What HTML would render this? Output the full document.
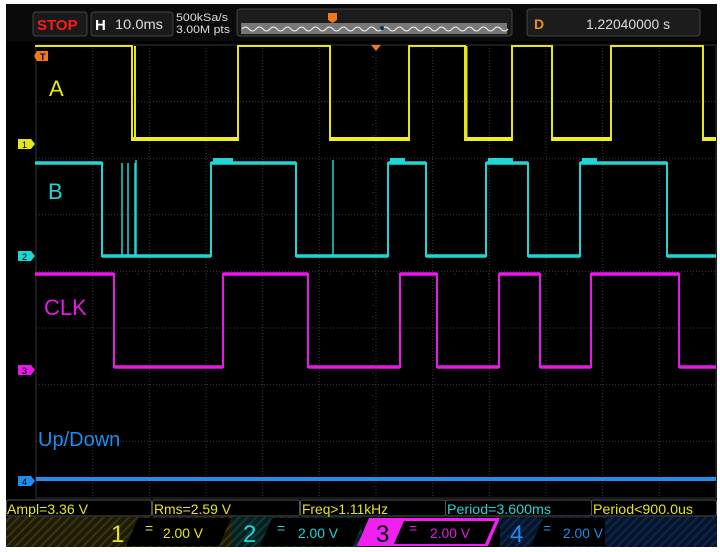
<!DOCTYPE html>
<html><head><meta charset="utf-8"><style>
html,body{margin:0;padding:0;background:#fff;}
svg{display:block;font-family:"Liberation Sans",sans-serif;}
</style></head><body>
<svg width="720" height="552" viewBox="0 0 720 552" xmlns="http://www.w3.org/2000/svg">
<defs>
<pattern id="hy" width="6" height="6" patternUnits="userSpaceOnUse" patternTransform="rotate(45)"><rect width="6" height="6" fill="#1d1a05"/><rect width="2" height="6" fill="#3a3510"/></pattern>
<pattern id="hc" width="6" height="6" patternUnits="userSpaceOnUse" patternTransform="rotate(45)"><rect width="6" height="6" fill="#06201f"/><rect width="2" height="6" fill="#0f3b3a"/></pattern>
<pattern id="hb" width="6" height="6" patternUnits="userSpaceOnUse" patternTransform="rotate(45)"><rect width="6" height="6" fill="#05142a"/><rect width="2" height="6" fill="#0c2747"/></pattern>
</defs>
<rect x="0" y="0" width="720" height="552" fill="#fff"/>
<rect x="6" y="4" width="711" height="543" fill="#000"/>
<!-- top bar -->
<rect x="6" y="4" width="711" height="37" fill="#0a0a0a"/>
<rect x="33" y="12" width="54" height="24" rx="3" fill="#1a1a1a" stroke="#444"/>
<text x="37" y="30" font-size="15" font-weight="bold" fill="#ff1a1a">STOP</text>
<rect x="91" y="12" width="82" height="24" rx="3" fill="#1a1a1a" stroke="#444"/>
<text x="95" y="30" font-size="15" font-weight="bold" fill="#fff">H</text>
<text x="115" y="29" font-size="14" fill="#ddd" textLength="48" lengthAdjust="spacingAndGlyphs">10.0ms</text>
<text x="176" y="21" font-size="11" fill="#ddd" textLength="52" lengthAdjust="spacingAndGlyphs">500kSa/s</text>
<text x="176" y="33" font-size="11" fill="#ddd" textLength="54" lengthAdjust="spacingAndGlyphs">3.00M pts</text>
<rect x="237" y="9" width="275" height="27" rx="3" fill="#1c1c1c" stroke="#444"/>
<rect x="241" y="23" width="266" height="11" fill="#777"/>
<path d="M242 29 q3.5 -4 7 0 t7 0 t7 0 t7 0 t7 0 t7 0 t7 0 t7 0 t7 0 t7 0 t7 0 t7 0 t7 0 t7 0 t7 0 t7 0 t7 0 t7 0 t7 0 t7 0 t7 0 t7 0 t7 0 t7 0 t7 0 t7 0 t7 0 t7 0 t7 0 t7 0 t7 0 t7 0 t7 0 t7 0 t7 0 t7 0 t7 0 t7 0" fill="none" stroke="#eee" stroke-width="1"/>
<circle cx="382" cy="28" r="2" fill="#036"/>
<path d="M328 13 h9 v7 l-4.5 3 l-4.5 -3z" fill="#f07a1a"/>
<rect x="527" y="9" width="173" height="27" rx="3" fill="#1c1c1c" stroke="#444"/>
<text x="534" y="29" font-size="14" font-weight="bold" fill="#f0901a">D</text>
<text x="586" y="29" font-size="14" fill="#ddd" textLength="84" lengthAdjust="spacingAndGlyphs">1.22040000 s</text>
<!-- grid -->
<g stroke="#3a3a3a" stroke-width="1" stroke-dasharray="1,2">
<line x1="92.7" y1="45" x2="92.7" y2="498"/><line x1="149.3" y1="45" x2="149.3" y2="498"/><line x1="206" y1="45" x2="206" y2="498"/><line x1="262.7" y1="45" x2="262.7" y2="498"/><line x1="319.3" y1="45" x2="319.3" y2="498"/><line x1="376" y1="45" x2="376" y2="498"/><line x1="432.7" y1="45" x2="432.7" y2="498"/><line x1="489.3" y1="45" x2="489.3" y2="498"/><line x1="546" y1="45" x2="546" y2="498"/><line x1="602.7" y1="45" x2="602.7" y2="498"/><line x1="659.3" y1="45" x2="659.3" y2="498"/>
<line x1="36" y1="101.6" x2="716" y2="101.6"/><line x1="36" y1="158.2" x2="716" y2="158.2"/><line x1="36" y1="214.8" x2="716" y2="214.8"/><line x1="36" y1="271.4" x2="716" y2="271.4"/><line x1="36" y1="328" x2="716" y2="328"/><line x1="36" y1="384.6" x2="716" y2="384.6"/><line x1="36" y1="441.2" x2="716" y2="441.2"/>
</g>
<line x1="373" y1="45" x2="373" y2="498" stroke="#444" stroke-dasharray="1,10.3"/>
<line x1="36" y1="274" x2="716" y2="274" stroke="#444" stroke-dasharray="1,10.3"/>
<rect x="36" y="45" width="680" height="453" fill="none" stroke="#333"/>
<!-- trigger marker -->
<path d="M371 45 h10 l-5 6z" fill="#f07a1a"/>
<path d="M37 51 h11 v10 h-11 l-3 -5z" fill="#f07a1a"/>
<text x="40" y="60" font-size="9" font-weight="bold" fill="#000">T</text>
<!-- channel markers -->
<path d="M18 139 h13 l4 5 l-4 5 h-13z" fill="#e6e617"/><text x="22" y="148" font-size="9" fill="#000">1</text>
<path d="M18 251 h13 l4 5 l-4 5 h-13z" fill="#1ed6d6"/><text x="22" y="260" font-size="9" fill="#000">2</text>
<path d="M18 365 h13 l4 5 l-4 5 h-13z" fill="#e619e6"/><text x="22" y="374" font-size="9" fill="#000">3</text>
<path d="M18 476 h13 l4 5 l-4 5 h-13z" fill="#1e8cf0"/><text x="22" y="485" font-size="9" fill="#000">4</text>
<!-- waveforms -->
<polyline fill="none" stroke="#e6e617" stroke-width="2" points="35,46 132,46 132,140 238,140 238,46 330,46 330,140 409,140 409,46 465,46 465,140 512,140 512,46 552,46 552,140 611,140 611,46 703,46 703,140 716,140"/>
<g stroke="#f0f020" stroke-width="4"><line x1="132" y1="139" x2="238" y2="139"/><line x1="330" y1="139" x2="409" y2="139"/><line x1="465" y1="139" x2="512" y2="139"/><line x1="552" y1="139" x2="611" y2="139"/><line x1="703" y1="139" x2="716" y2="139"/></g>
<line x1="135" y1="46" x2="135" y2="140" stroke="#e6e617" stroke-width="2"/>
<line x1="466" y1="46" x2="466" y2="140" stroke="#e6e617" stroke-width="3"/>
<polyline fill="none" stroke="#1ed6d6" stroke-width="2" points="35,163 102,163 102,256 211,256 211,163 296,163 296,256 388,256 388,163 426,163 426,256 486,256 486,163 528,163 528,256 580,256 580,163 667,163 667,256 716,256"/>
<g stroke="#1ed6d6" stroke-width="3.5"><line x1="35" y1="163" x2="102" y2="163"/><line x1="211" y1="163" x2="296" y2="163"/><line x1="388" y1="163" x2="426" y2="163"/><line x1="486" y1="163" x2="528" y2="163"/><line x1="580" y1="163" x2="667" y2="163"/><line x1="102" y1="256" x2="211" y2="256"/><line x1="296" y1="256" x2="388" y2="256"/><line x1="426" y1="256" x2="486" y2="256"/><line x1="528" y1="256" x2="580" y2="256"/><line x1="667" y1="256" x2="716" y2="256"/></g>
<g stroke="#1ed6d6" stroke-width="1.5"><line x1="122" y1="163" x2="122" y2="256"/><line x1="128" y1="163" x2="128" y2="256"/><line x1="135" y1="163" x2="135" y2="256"/><line x1="136" y1="160" x2="136" y2="256"/><line x1="333" y1="160" x2="333" y2="256"/></g>
<g fill="#1ed6d6"><rect x="213" y="158" width="20" height="4"/><rect x="390" y="158" width="15" height="4"/><rect x="488" y="158" width="25" height="4"/><rect x="582" y="158" width="15" height="4"/></g>
<polyline fill="none" stroke="#e619e6" stroke-width="2" points="35,274 114,274 114,367 223,367 223,274 308,274 308,367 400,367 400,274 437,274 437,367 499,367 499,274 540,274 540,367 591,367 591,274 679,274 679,367 716,367"/>
<g stroke="#e619e6" stroke-width="3.5"><line x1="35" y1="274" x2="114" y2="274"/><line x1="223" y1="274" x2="308" y2="274"/><line x1="400" y1="274" x2="437" y2="274"/><line x1="499" y1="274" x2="540" y2="274"/><line x1="591" y1="274" x2="679" y2="274"/><line x1="114" y1="367" x2="223" y2="367"/><line x1="308" y1="367" x2="400" y2="367"/><line x1="437" y1="367" x2="499" y2="367"/><line x1="540" y1="367" x2="591" y2="367"/><line x1="679" y1="367" x2="716" y2="367"/></g>
<line x1="36" y1="479" x2="716" y2="479" stroke="#1e8cf0" stroke-width="4"/>
<!-- labels -->
<text x="49" y="96" font-size="22" fill="#e6e617">A</text>
<text x="48" y="199" font-size="22" fill="#1ed6d6">B</text>
<text x="44" y="315" font-size="22" fill="#e619e6">CLK</text>
<text x="38" y="446" font-size="20" fill="#1e8cf0">Up/Down</text>
<!-- measurement bar -->
<g fill="#000" stroke="#555" stroke-width="1">
<rect x="6.5" y="500" width="145" height="16" rx="2"/><rect x="152.5" y="500" width="147" height="16" rx="2"/><rect x="300.5" y="500" width="145" height="16" rx="2"/><rect x="445.5" y="500" width="146" height="16" rx="2"/><rect x="591.5" y="500" width="125" height="16" rx="2"/>
</g>
<g font-size="14">
<text x="7" y="514" fill="#e6e617" textLength="81" lengthAdjust="spacingAndGlyphs">Ampl=3.36 V</text>
<text x="154" y="514" fill="#e6e617" textLength="77" lengthAdjust="spacingAndGlyphs">Rms=2.59 V</text>
<text x="302" y="514" fill="#e6e617" textLength="86" lengthAdjust="spacingAndGlyphs">Freq&gt;1.11kHz</text>
<text x="447" y="514" fill="#1ed6d6" textLength="104" lengthAdjust="spacingAndGlyphs">Period=3.600ms</text>
<text x="593" y="514" fill="#e6e617" textLength="100" lengthAdjust="spacingAndGlyphs">Period&lt;900.0us</text>
</g>
<!-- channel bar -->
<rect x="6" y="517" width="226" height="30" fill="url(#hy)"/>
<rect x="232" y="517" width="130" height="30" fill="url(#hc)"/>
<rect x="500" y="517" width="217" height="30" fill="url(#hb)"/>
<path d="M369 518 h131 l-12 28 h-131z" fill="#f020f0"/>
<path d="M138 518 h93 l-12 28 h-93z" fill="#000"/>
<path d="M272 518 h93 l-12 28 h-93z" fill="#000"/>
<path d="M404 521 h91 l-10 23 h-91z" fill="#000"/>
<path d="M543 518 h62 l0 28 h-74z" fill="#000"/>
<g font-size="24">
<text x="111" y="542" fill="#e6e617">1</text>
<text x="243" y="542" fill="#1ed6d6">2</text>
<text x="376" y="542" fill="#000">3</text>
<text x="510" y="542" fill="#1e8cf0">4</text>
</g>
<g font-size="14">
<text x="145" y="533" fill="#e6e617">=</text><text x="163" y="538" fill="#e6e617" textLength="40" lengthAdjust="spacingAndGlyphs">2.00 V</text>
<text x="277" y="533" fill="#1ed6d6">=</text><text x="298" y="538" fill="#1ed6d6" textLength="40" lengthAdjust="spacingAndGlyphs">2.00 V</text>
<text x="409" y="533" fill="#e619e6">=</text><text x="430" y="538" fill="#e619e6" textLength="40" lengthAdjust="spacingAndGlyphs">2.00 V</text>
<text x="543" y="533" fill="#1e8cf0">=</text><text x="563" y="538" fill="#1e8cf0" textLength="40" lengthAdjust="spacingAndGlyphs">2.00 V</text>
</g>
</svg>
</body></html>
